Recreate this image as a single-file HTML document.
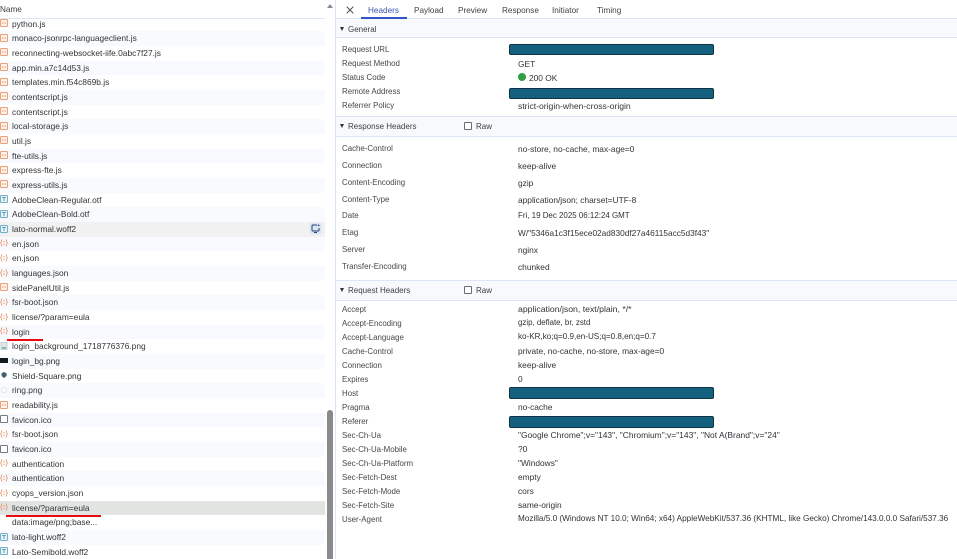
<!DOCTYPE html>
<html><head><meta charset="utf-8"><style>
html,body{margin:0;padding:0;width:957px;height:559px;overflow:hidden;background:#fff}
body{position:relative;font-family:"Liberation Sans",sans-serif;font-size:8.4px;color:#303438}
#root{position:absolute;left:0;top:0;width:957px;height:559px;overflow:hidden;filter:blur(.35px)}
#list{position:absolute;left:0;top:16.6px;width:325px;height:543px;overflow:hidden}
#list div{position:relative;height:14.68px;line-height:14.68px;padding-left:12px;white-space:nowrap}
#list div:nth-child(even){background:#f8fafd}
#list svg{position:absolute;left:0;top:2.5px;width:8px;height:8px}
.a{position:absolute;white-space:nowrap;line-height:12px}
.l{left:342px;color:#44484c;font-size:7.9px;margin-top:.7px}
.v{left:518px;font-size:8.37px}
.b{position:absolute;left:509px;width:203px;height:9.5px;background:#14607f;border:1px solid #0f3344;border-radius:2px}
.h{position:absolute;left:336px;width:621px;background:#f8f9fd;border-top:1px solid #dde6f8;border-bottom:1px solid #dde6f8;box-sizing:border-box}
.t{color:#3f4347;font-size:8.2px}
.s{color:#3a3e42;font-size:8px;margin-top:.5px}
.c{position:absolute;left:464px;width:6px;height:6px;border:1px solid #6a6e72;border-radius:1px;background:#fff}
.tri{position:absolute;left:340px;width:0;height:0;border-left:2.6px solid transparent;border-right:2.6px solid transparent;border-top:4.4px solid #333}
</style></head><body>
<svg width="0" height="0" style="position:absolute"><defs>
<symbol id="j" viewBox="0 0 8 8"><rect x=".5" y=".5" width="7" height="7" rx="1" fill="#fdf3ec" stroke="#ee9e72"/><circle cx="2.7" cy="4" r=".8" fill="#ee9e72"/><circle cx="5.3" cy="4" r=".8" fill="#ee9e72"/></symbol>
<symbol id="o" viewBox="0 0 8 8"><path d="M2.3.7C1 .7 1.4 2.6 1.2 3.2.9 3.9.3 4 .3 4s.6.1.9.8c.2.6-.2 2.5 1.1 2.5M5.7.7C7 .7 6.6 2.6 6.8 3.2c.3.7.9.8.9.8s-.6.1-.9.8c-.2.6.2 2.5-1.1 2.5" fill="none" stroke="#ea9264" stroke-width=".8"/><circle cx="4" cy="2.8" r=".6" fill="#c9825c"/><circle cx="4" cy="5.2" r=".6" fill="#c9825c"/></symbol>
<symbol id="f" viewBox="0 0 8 8"><rect x=".5" y=".5" width="7" height="7" rx="1" fill="#eaf4f8" stroke="#6fb0c8"/><path d="M2.2 2.4H5.8M4 2.4V6" stroke="#4a93ae" stroke-width=".9" fill="none"/></symbol>
<symbol id="e" viewBox="0 0 8 8"><rect x=".5" y=".5" width="7" height="7" rx=".8" fill="#fff" stroke="#77797c"/></symbol>
</defs></svg>
<div id="root">
<div class="a" style="left:0;top:3.5px;color:#3d4145;font-size:8.2px">Name</div>
<div style="position:absolute;left:0;top:18px;width:325px;height:1px;background:#dde6f8"></div>
<div id="list">
<div><svg><use href="#j"/></svg>python.js</div>
<div><svg><use href="#j"/></svg>monaco-jsonrpc-languageclient.js</div>
<div><svg><use href="#j"/></svg>reconnecting-websocket-iife.0abc7f27.js</div>
<div><svg><use href="#j"/></svg>app.min.a7c14d53.js</div>
<div><svg><use href="#j"/></svg>templates.min.f54c869b.js</div>
<div><svg><use href="#j"/></svg>contentscript.js</div>
<div><svg><use href="#j"/></svg>contentscript.js</div>
<div><svg><use href="#j"/></svg>local-storage.js</div>
<div><svg><use href="#j"/></svg>util.js</div>
<div><svg><use href="#j"/></svg>fte-utils.js</div>
<div><svg><use href="#j"/></svg>express-fte.js</div>
<div><svg><use href="#j"/></svg>express-utils.js</div>
<div><svg><use href="#f"/></svg>AdobeClean-Regular.otf</div>
<div><svg><use href="#f"/></svg>AdobeClean-Bold.otf</div>
<div style="background:#f1f1f1"><svg><use href="#f"/></svg>lato-normal.woff2</div>
<div><svg><use href="#o"/></svg>en.json</div>
<div><svg><use href="#o"/></svg>en.json</div>
<div><svg><use href="#o"/></svg>languages.json</div>
<div><svg><use href="#j"/></svg>sidePanelUtil.js</div>
<div><svg><use href="#o"/></svg>fsr-boot.json</div>
<div><svg><use href="#o"/></svg>license/?param=eula</div>
<div><svg><use href="#o"/></svg>login</div>
<div><svg viewBox="0 0 8 8"><rect x="1" y="0" width="6" height="8" fill="#dfe6ee" stroke="#aab4c0" stroke-width=".6"/><rect x="2" y="5" width="4" height="2" fill="#7fbf8f"/></svg>login_background_1718776376.png</div>
<div><svg viewBox="0 0 8 8"><rect x="0" y="1" width="8" height="5" fill="#101820"/></svg>login_bg.png</div>
<div><svg viewBox="0 0 8 8"><path d="M4 1 6.6 2.2V5L4 7 1.6 5V2.2Z" fill="#3f6272"/></svg>Shield-Square.png</div>
<div><svg viewBox="0 0 8 8"><circle cx="4" cy="4" r="2.8" fill="none" stroke="#e6e6e6"/></svg>ring.png</div>
<div><svg><use href="#j"/></svg>readability.js</div>
<div><svg><use href="#e"/></svg>favicon.ico</div>
<div><svg><use href="#o"/></svg>fsr-boot.json</div>
<div><svg><use href="#e"/></svg>favicon.ico</div>
<div><svg><use href="#o"/></svg>authentication</div>
<div><svg><use href="#o"/></svg>authentication</div>
<div><svg><use href="#o"/></svg>cyops_version.json</div>
<div style="background:#e2e4e1"><svg><use href="#o"/></svg>license/?param=eula</div>
<div>data:image/png;base...</div>
<div><svg><use href="#f"/></svg>lato-light.woff2</div>
<div><svg><use href="#f"/></svg>Lato-Semibold.woff2</div>
</div>
<div style="position:absolute;left:7px;top:338.5px;width:36px;height:2.5px;background:#e80b12"></div>
<div style="position:absolute;left:6px;top:514.5px;width:95px;height:2.5px;background:#e80b12"></div>
<svg style="position:absolute;left:309px;top:222px;width:13px;height:13px" viewBox="0 0 13 13"><rect x=".5" y=".5" width="12" height="12" rx="3" fill="#dde5f5"/><path d="M8 3H4a1 1 0 0 0-1 1v4a1 1 0 0 0 1 1h5a1 1 0 0 0 1-1V6M5 10.5H8" fill="none" stroke="#1f3f70"/><circle cx="9.6" cy="3.4" r=".9" fill="#1f3f70"/></svg>
<div style="position:absolute;left:327px;top:410px;width:6px;height:149px;background:#8b8b8b;border-radius:3px 3px 0 0"></div>
<div style="position:absolute;left:327px;top:3.5px;width:0;height:0;border-left:3px solid transparent;border-right:3px solid transparent;border-bottom:4.5px solid #8a8a8a"></div>
<div style="position:absolute;left:335px;top:0;width:1px;height:559px;background:#dde6f8"></div>

<svg style="position:absolute;left:346px;top:5.5px;width:8px;height:8px" viewBox="0 0 8 8"><path d="M.7.7 7.3 7.3M7.3.7.7 7.3" stroke="#3c4043" stroke-width="1" fill="none"/></svg>
<div class="a t" style="left:368px;top:4.5px;color:#3a55b0">Headers</div>
<div class="a t" style="left:414px;top:4.5px">Payload</div>
<div class="a t" style="left:458px;top:4.5px">Preview</div>
<div class="a t" style="left:502px;top:4.5px">Response</div>
<div class="a t" style="left:552px;top:4.5px">Initiator</div>
<div class="a t" style="left:597px;top:4.5px">Timing</div>
<div style="position:absolute;left:336px;top:18px;width:621px;height:1px;background:#dde6f8"></div>
<div style="position:absolute;left:361px;top:17px;width:46px;height:2px;background:#2f55c8"></div>

<div class="h" style="top:19px;height:19px;border-top:0"></div>
<div class="tri" style="top:27px"></div>
<div class="a s" style="left:348px;top:23px">General</div>

<div class="a l" style="top:43px">Request URL</div><div class="b" style="top:43.5px"></div>
<div class="a l" style="top:57px">Request Method</div><div class="a v" style="top:57.5px">GET</div>
<div class="a l" style="top:71px">Status Code</div>
<div style="position:absolute;left:518px;top:73px;width:8px;height:8px;border-radius:50%;background:#2ea043"></div>
<div class="a v" style="left:529px;top:71.5px">200 OK</div>
<div class="a l" style="top:85px">Remote Address</div><div class="b" style="top:87.5px"></div>
<div class="a l" style="top:99px">Referrer Policy</div><div class="a v" style="top:99.5px;font-size:8.6px">strict-origin-when-cross-origin</div>

<div class="h" style="top:116px;height:21px"></div>
<div class="tri" style="top:124px"></div>
<div class="a s" style="left:348px;top:120px">Response Headers</div>
<div class="c" style="top:122px"></div>
<div class="a s" style="left:476px;top:120.5px">Raw</div>

<div class="a l" style="top:142.5px">Cache-Control</div><div class="a v" style="top:143px">no-store, no-cache, max-age=0</div>
<div class="a l" style="top:159.5px">Connection</div><div class="a v" style="top:160px">keep-alive</div>
<div class="a l" style="top:176px">Content-Encoding</div><div class="a v" style="top:177px">gzip</div>
<div class="a l" style="top:193px">Content-Type</div><div class="a v" style="top:193.5px">application/json; charset=UTF-8</div>
<div class="a l" style="top:209.5px">Date</div><div class="a v" style="top:210px;font-size:7.95px">Fri, 19 Dec 2025 06:12:24 GMT</div>
<div class="a l" style="top:226px">Etag</div><div class="a v" style="top:227px;font-size:8.3px">W/"5346a1c3f15ece02ad830df27a46115acc5d3f43"</div>
<div class="a l" style="top:243px">Server</div><div class="a v" style="top:244px">nginx</div>
<div class="a l" style="top:260px">Transfer-Encoding</div><div class="a v" style="top:260.5px">chunked</div>

<div class="h" style="top:280px;height:21px"></div>
<div class="tri" style="top:288px"></div>
<div class="a s" style="left:348px;top:284px">Request Headers</div>
<div class="c" style="top:286px"></div>
<div class="a s" style="left:476px;top:284.5px">Raw</div>

<div class="a l" style="top:303px">Accept</div><div class="a v" style="top:303px;font-size:8.7px">application/json, text/plain, */*</div>
<div class="a l" style="top:317px">Accept-Encoding</div><div class="a v" style="top:317px;font-size:7.9px">gzip, deflate, br, zstd</div>
<div class="a l" style="top:331px">Accept-Language</div><div class="a v" style="top:331px;font-size:8.1px">ko-KR,ko;q=0.9,en-US;q=0.8,en;q=0.7</div>
<div class="a l" style="top:345px">Cache-Control</div><div class="a v" style="top:345px">private, no-cache, no-store, max-age=0</div>
<div class="a l" style="top:359px">Connection</div><div class="a v" style="top:359px">keep-alive</div>
<div class="a l" style="top:373px">Expires</div><div class="a v" style="top:373px">0</div>
<div class="a l" style="top:387px">Host</div><div class="b" style="top:387px"></div>
<div class="a l" style="top:401px">Pragma</div><div class="a v" style="top:401px">no-cache</div>
<div class="a l" style="top:415px">Referer</div><div class="b" style="top:416px"></div>
<div class="a l" style="top:429px">Sec-Ch-Ua</div><div class="a v" style="top:429px;font-size:8.45px">"Google Chrome";v="143", "Chromium";v="143", "Not A(Brand";v="24"</div>
<div class="a l" style="top:443px">Sec-Ch-Ua-Mobile</div><div class="a v" style="top:443px">?0</div>
<div class="a l" style="top:457px">Sec-Ch-Ua-Platform</div><div class="a v" style="top:457px">"Windows"</div>
<div class="a l" style="top:471px">Sec-Fetch-Dest</div><div class="a v" style="top:471px">empty</div>
<div class="a l" style="top:485px">Sec-Fetch-Mode</div><div class="a v" style="top:485px">cors</div>
<div class="a l" style="top:499px">Sec-Fetch-Site</div><div class="a v" style="top:499px">same-origin</div>
<div class="a l" style="top:513px">User-Agent</div><div class="a v" style="top:513px;font-size:8.2px">Mozilla/5.0 (Windows NT 10.0; Win64; x64) AppleWebKit/537.36 (KHTML, like Gecko) Chrome/143.0.0.0 Safari/537.36</div>
</div>
</body></html>
